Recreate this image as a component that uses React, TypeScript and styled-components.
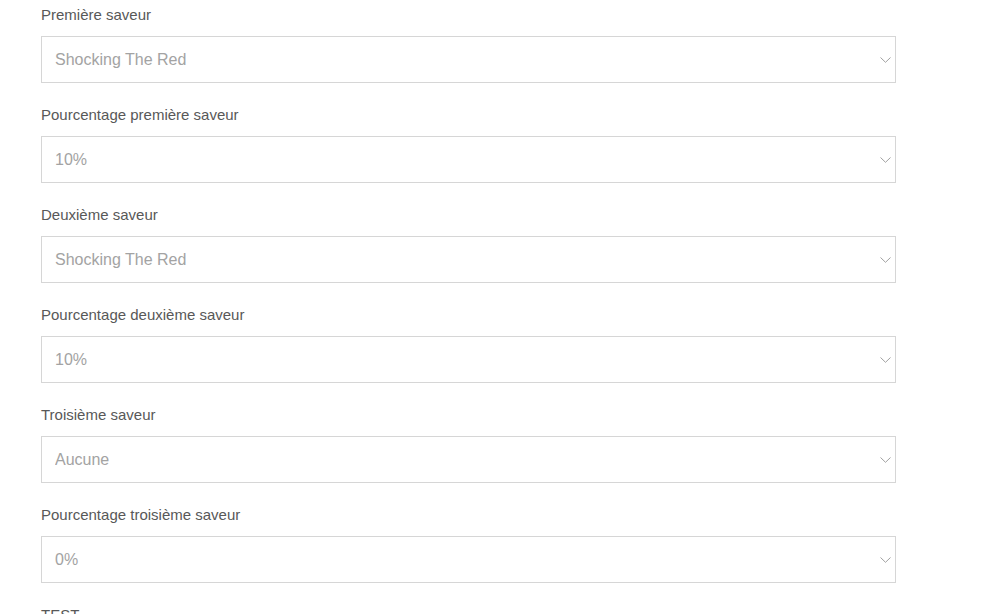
import React from 'react';
import styled, { createGlobalStyle } from 'styled-components';

const GlobalStyle = createGlobalStyle`
    html, body {
        margin: 0;
        padding: 0;
        background: #ffffff;
    }
    body {
        font-family: 'Liberation Sans', Arial, Helvetica, sans-serif;
        -webkit-font-smoothing: antialiased;
    }
`;

interface FieldOption {
    label: string;
    value: string;
    options: string[];
}

const fields: FieldOption[] = [
    { label: 'Première saveur', value: 'Shocking The Red', options: ['Aucune', 'Shocking The Red'] },
    { label: 'Pourcentage première saveur', value: '10%', options: ['0%', '10%', '20%', '30%'] },
    { label: 'Deuxième saveur', value: 'Shocking The Red', options: ['Aucune', 'Shocking The Red'] },
    { label: 'Pourcentage deuxième saveur', value: '10%', options: ['0%', '10%', '20%', '30%'] },
    { label: 'Troisième saveur', value: 'Aucune', options: ['Aucune', 'Shocking The Red'] },
    { label: 'Pourcentage troisième saveur', value: '0%', options: ['0%', '10%', '20%', '30%'] },
];

const StyledForm = styled.form`
    display: flex;
    flex-direction: column;
    width: 855px;
    padding: 5px 0 0 41px;
`;

const StyledGroup = styled.div`
    display: flex;
    flex-direction: column;
    margin-bottom: 22px;
`;

const StyledLabel = styled.label`
    display: block;
    font-size: 15px;
    line-height: 20px;
    color: #585858;
    margin-bottom: 11px;
`;

const StyledSelectWrap = styled.div`
    position: relative;
    width: 100%;
`;

const StyledSelect = styled.select`
    appearance: none;
    -webkit-appearance: none;
    box-sizing: border-box;
    width: 100%;
    height: 47px;
    margin: 0;
    padding: 0 40px 0 13px;
    border: 1px solid #d6d6d6;
    border-radius: 0;
    background: #ffffff;
    font-family: inherit;
    font-size: 16px;
    color: #a3a3a3;
    outline: none;
`;

const StyledChevron = styled.svg`
    position: absolute;
    right: 5px;
    top: 50%;
    width: 11px;
    height: 6px;
    margin-top: -3px;
    pointer-events: none;
`;

const StyledTrailingLabel = styled(StyledLabel)`
    margin-bottom: 0;
`;

const Chevron = () => (
    <StyledChevron viewBox="0 0 11 6" fill="none">
        <path d="M0.5 0.5 L5.5 5.3 L10.5 0.5" stroke="#a0a0a0" strokeWidth="1" />
    </StyledChevron>
);

const SelectField: React.FC<{ field: FieldOption; id: string }> = ({ field, id }) => (
    <StyledGroup>
        <StyledLabel htmlFor={id}>{field.label}</StyledLabel>
        <StyledSelectWrap>
            <StyledSelect id={id} defaultValue={field.value}>
                {field.options.map((o) => (
                    <option key={o} value={o}>
                        {o}
                    </option>
                ))}
            </StyledSelect>
            <Chevron />
        </StyledSelectWrap>
    </StyledGroup>
);

export default function App() {
    return (
        <>
            <GlobalStyle />
            <StyledForm onSubmit={(e) => e.preventDefault()}>
                {fields.map((f, i) => (
                    <SelectField key={f.label} field={f} id={`flavour-${i}`} />
                ))}
                <StyledTrailingLabel>TEST</StyledTrailingLabel>
            </StyledForm>
        </>
    );
}
